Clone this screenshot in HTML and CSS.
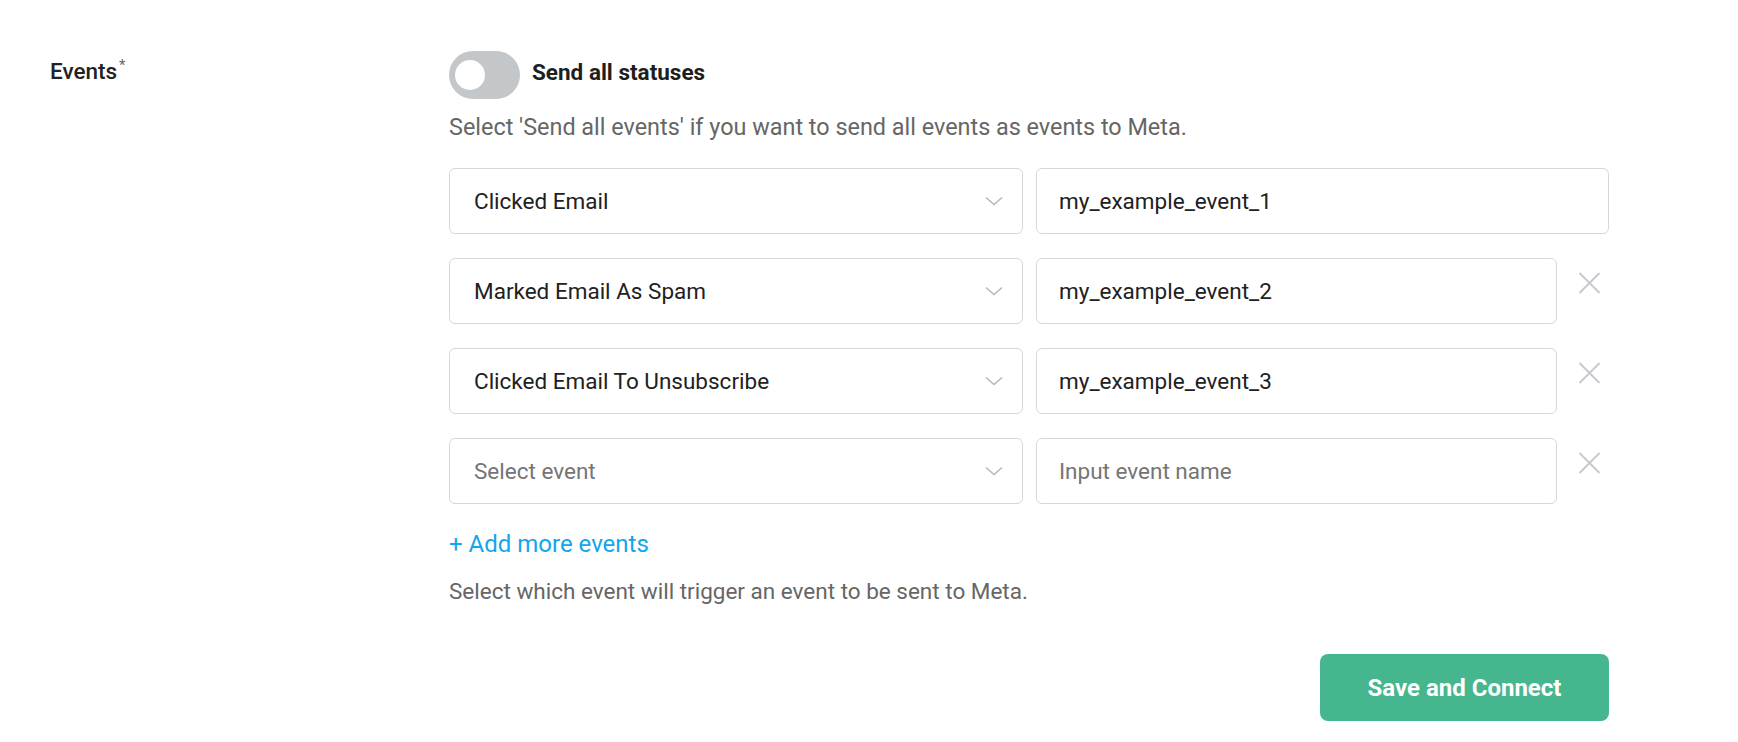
FILE: index.html
```html
<!DOCTYPE html>
<html lang="en">
<head>
<meta charset="utf-8">
<title>Events</title>
<link rel="stylesheet" href="styles.css">
</head>
<body>
<div class="page">
  <div class="field">
    <div class="label">Events<sup class="req">*</sup></div>
    <div class="control">
      <div class="toggle-row">
        <span class="toggle"><span class="knob"></span></span>
        <span class="toggle-text">Send all statuses</span>
      </div>
      <p class="hint hint-top">Select 'Send all events' if you want to send all events as events to Meta.</p>

      <div class="rows">
        <div class="row">
          <div class="select"><span class="value">Clicked Email</span><svg class="chev" width="18" height="10" viewBox="0 0 18 10"><polyline points="1,1.5 9,8.5 17,1.5" fill="none" stroke="#b3b8be" stroke-width="1.5"/></svg></div>
          <div class="input"><span class="value">my_example_event_1</span></div>
        </div>
        <div class="row">
          <div class="select"><span class="value">Marked Email As Spam</span><svg class="chev" width="18" height="10" viewBox="0 0 18 10"><polyline points="1,1.5 9,8.5 17,1.5" fill="none" stroke="#b3b8be" stroke-width="1.5"/></svg></div>
          <div class="input"><span class="value">my_example_event_2</span></div>
          <span class="remove"><svg width="23" height="22" viewBox="0 0 23 22"><path d="M1.5 1 L21.5 21 M21.5 1 L1.5 21" stroke="#c6cacf" stroke-width="2" fill="none"/></svg></span>
        </div>
        <div class="row">
          <div class="select"><span class="value">Clicked Email To Unsubscribe</span><svg class="chev" width="18" height="10" viewBox="0 0 18 10"><polyline points="1,1.5 9,8.5 17,1.5" fill="none" stroke="#b3b8be" stroke-width="1.5"/></svg></div>
          <div class="input"><span class="value">my_example_event_3</span></div>
          <span class="remove"><svg width="23" height="22" viewBox="0 0 23 22"><path d="M1.5 1 L21.5 21 M21.5 1 L1.5 21" stroke="#c6cacf" stroke-width="2" fill="none"/></svg></span>
        </div>
        <div class="row">
          <div class="select"><span class="value placeholder">Select event</span><svg class="chev" width="18" height="10" viewBox="0 0 18 10"><polyline points="1,1.5 9,8.5 17,1.5" fill="none" stroke="#b3b8be" stroke-width="1.5"/></svg></div>
          <div class="input"><span class="value placeholder">Input event name</span></div>
          <span class="remove"><svg width="23" height="22" viewBox="0 0 23 22"><path d="M1.5 1 L21.5 21 M21.5 1 L1.5 21" stroke="#c6cacf" stroke-width="2" fill="none"/></svg></span>
        </div>
      </div>

      <div class="add">+ Add more events</div>
      <p class="hint hint-bottom">Select which event will trigger an event to be sent to Meta.</p>

      <div class="actions">
        <button class="save" type="button">Save and Connect</button>
      </div>
    </div>
  </div>
</div>
</body>
</html>
```

FILE: styles.css
```css
html, body {
  margin: 0;
  padding: 0;
  background: #ffffff;
}

body {
  font-family: Roboto, "Liberation Sans", Arial, sans-serif;
  font-size: 22.5px;
  color: #212121;
}

.page {
  padding: 51px 0 0 50px;
}

.field {
  display: flex;
  align-items: flex-start;
}

.label {
  width: 399px;
  flex: 0 0 399px;
  font-weight: 500;
  line-height: 27px;
  padding-top: 7px;
  color: #222;
}

.req {
  font-size: 15px;
  font-weight: 400;
  color: #666;
  vertical-align: top;
  position: relative;
  top: -6px;
  margin-left: 2px;
}

.control {
  width: 1160px;
  display: flex;
  flex-direction: column;
}

.toggle-row {
  display: flex;
  align-items: center;
  height: 48px;
}

.toggle {
  width: 71px;
  height: 48px;
  border-radius: 24px;
  background: #c3c7ca;
  display: flex;
  align-items: center;
  padding-left: 6px;
  box-sizing: border-box;
  flex: 0 0 auto;
}

.knob {
  width: 30px;
  height: 30px;
  border-radius: 50%;
  background: #ffffff;
}

.toggle-text {
  margin-left: 12px;
  font-weight: 700;
  line-height: 27px;
  padding-bottom: 5px;
  color: #1e1e1e;
}

.hint {
  margin: 0;
  line-height: 27px;
  color: #666666;
}

.hint-top {
  margin-top: 15px;
  font-size: 23.4px;
}

.rows {
  margin-top: 27px;
  display: flex;
  flex-direction: column;
  gap: 24px;
}

.row {
  display: flex;
  align-items: flex-start;
}

.select,
.input {
  height: 66px;
  box-sizing: border-box;
  border: 1px solid #d5d8dc;
  border-radius: 6px;
  display: flex;
  align-items: center;
  background: #fff;
}

.select {
  flex: 0 0 574px;
  width: 574px;
  padding: 0 19px 0 24px;
  justify-content: space-between;
}

.input {
  flex: 1 1 auto;
  margin-left: 13px;
  padding: 0 22px;
}

.value {
  line-height: 27px;
  color: #212121;
  white-space: nowrap;
}

.value.placeholder {
  color: #757575;
}

.chev {
  display: block;
  flex: 0 0 auto;
}

.remove {
  flex: 0 0 52px;
  width: 52px;
  box-sizing: border-box;
  padding: 14px 0 0 21px;
  display: flex;
}

.remove svg {
  display: block;
}

.add {
  margin-top: 27px;
  line-height: 27px;
  font-size: 24px;
  color: #12a5ec;
}

.hint-bottom {
  margin-top: 20px;
  font-size: 22.5px;
}

.actions {
  display: flex;
  justify-content: flex-end;
  margin-top: 49px;
}

.save {
  width: 289px;
  height: 67px;
  border: none;
  border-radius: 8px;
  background: #46b68e;
  color: #ffffff;
  font-family: Roboto, "Liberation Sans", Arial, sans-serif;
  font-size: 24px;
  font-weight: 700;
  cursor: pointer;
  padding: 0;
}
```
